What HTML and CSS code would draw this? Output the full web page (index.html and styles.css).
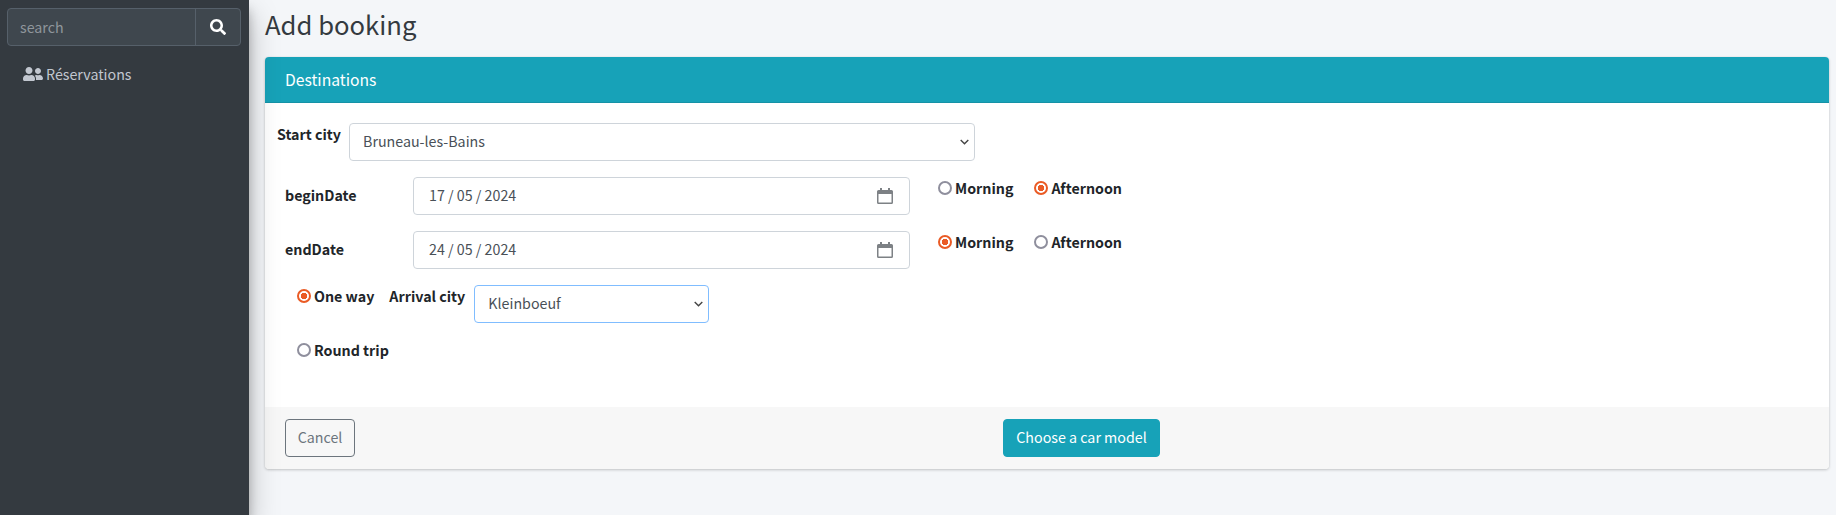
FILE: index.html
```html
<!DOCTYPE html>
<html lang="en">
<head>
    <meta charset="UTF-8">
    <meta name="viewport" content="width=device-width, initial-scale=1.0">
    <title>Add booking</title>
    <link rel="stylesheet" href="styles.css">
</head>
<body>
    <aside class="sidebar">
        <div class="search">
            <input class="search-input" type="text" placeholder="search">
            <button class="search-btn" type="button">
                <svg width="16" height="16" viewBox="0 0 512 512"><path fill="currentColor" d="M505 442.700L405.300 343c-4.500-4.500-10.600-7-17-7H372c27.600-35.300 44-79.700 44-128C416 93.100 322.900 0 208 0S0 93.100 0 208s93.100 208 208 208c48.300 0 92.700-16.400 128-44v16.300c0 6.400 2.500 12.500 7 17l99.700 99.700c9.400 9.400 24.600 9.400 33.900 0l28.300-28.300c9.400-9.400 9.400-24.600.1-34zM208 336c-70.700 0-128-57.200-128-128 0-70.700 57.200-128 128-128 70.700 0 128 57.200 128 128 0 70.700-57.200 128-128 128z"/></svg>
            </button>
        </div>
        <a class="nav-link" href="#">
            <svg width="20" height="16" viewBox="0 0 640 512"><path fill="currentColor" d="M192 256c61.900 0 112-50.100 112-112S253.900 32 192 32 80 82.100 80 144s50.100 112 112 112zm76.800 32h-8.300c-20.800 10-43.900 16-68.500 16s-47.600-6-68.500-16h-8.300C51.600 288 0 339.600 0 403.200V432c0 26.500 21.500 48 48 48h288c26.500 0 48-21.500 48-48v-28.800c0-63.600-51.600-115.200-115.200-115.200zM480 256c53 0 96-43 96-96s-43-96-96-96-96 43-96 96 43 96 96 96zm48 32h-3.800c-13.900 4.800-28.600 8-44.200 8s-30.300-3.200-44.200-8H432c-20.400 0-39.200 5.900-55.700 15.400 24.400 26.300 39.700 61.200 39.700 99.800v38.400c0 2.200-.5 4.300-.6 6.400H592c26.500 0 48-21.500 48-48 0-61.900-50.100-112-112-112z"/></svg>
            <span>Réservations</span>
        </a>
    </aside>

    <main class="content">
        <h1 class="page-title">Add booking</h1>

        <section class="card">
            <header class="card-header">Destinations</header>

            <div class="card-body">
                <div class="row-city">
                    <label class="lbl">Start city</label>
                    <div class="select-wrap start-select">
                        <select class="field">
                            <option>Bruneau-les-Bains</option>
                        </select>
                        <svg class="chevron" width="9" height="6" viewBox="0 0 9 6"><path d="M.7 1l3.800 3.800L8.300 1" fill="none" stroke="#444" stroke-width="1.400"/></svg>
                    </div>
                </div>

                <div class="row-date">
                    <label class="lbl date-lbl">beginDate</label>
                    <div class="field date-field">
                        <span>17 / 05 / 2024</span>
                        <svg width="16" height="16" viewBox="0 0 16 16"><path fill="#7d8185" d="M3 0h2v2h6V0h2v2h1.500A1.500 1.500 0 0 1 16 3.500v11a1.500 1.500 0 0 1-1.500 1.500h-13A1.500 1.500 0 0 1 0 14.500v-11A1.500 1.500 0 0 1 1.500 2H3zM1.500 6v8.500h13V6z"/></svg>
                    </div>
                    <div class="radios">
                        <label class="radio"><input type="radio" name="begin">Morning</label>
                        <label class="radio"><input type="radio" name="begin" checked>Afternoon</label>
                    </div>
                </div>

                <div class="row-date">
                    <label class="lbl date-lbl">endDate</label>
                    <div class="field date-field">
                        <span>24 / 05 / 2024</span>
                        <svg width="16" height="16" viewBox="0 0 16 16"><path fill="#7d8185" d="M3 0h2v2h6V0h2v2h1.500A1.500 1.500 0 0 1 16 3.500v11a1.500 1.500 0 0 1-1.500 1.500h-13A1.500 1.500 0 0 1 0 14.500v-11A1.500 1.500 0 0 1 1.500 2H3zM1.500 6v8.500h13V6z"/></svg>
                    </div>
                    <div class="radios">
                        <label class="radio"><input type="radio" name="end" checked>Morning</label>
                        <label class="radio"><input type="radio" name="end">Afternoon</label>
                    </div>
                </div>

                <div class="row-trip">
                    <label class="radio"><input type="radio" name="trip" checked>One way</label>
                    <label class="lbl arrival-lbl">Arrival city</label>
                    <div class="select-wrap arrival-select">
                        <select class="field focused">
                            <option>Kleinboeuf</option>
                        </select>
                        <svg class="chevron" width="9" height="6" viewBox="0 0 9 6"><path d="M.7 1l3.800 3.800L8.300 1" fill="none" stroke="#444" stroke-width="1.400"/></svg>
                    </div>
                </div>

                <div class="row-round">
                    <label class="radio"><input type="radio" name="trip">Round trip</label>
                </div>
            </div>

            <footer class="card-footer">
                <button class="btn btn-cancel" type="button">Cancel</button>
                <button class="btn btn-next" type="button">Choose a car model</button>
            </footer>
        </section>
    </main>
</body>
</html>
```

FILE: styles.css
```css
* {
    box-sizing: border-box;
}

body {
    margin: 0;
    height: 100vh;
    overflow: hidden;
    display: flex;
    background-color: #f4f6f9;
    color: #212529;
    font-family: "Noto Sans CJK SC", "Noto Sans", sans-serif;
    font-size: 14.250px;
    line-height: 24px;
}

/* sidebar */
.sidebar {
    width: 249px;
    flex-shrink: 0;
    padding: 8px 7px;
    background-color: #343a40;
    box-shadow: 0 14px 28px rgba(0, 0, 0, .25), 0 10px 10px rgba(0, 0, 0, .22);
    position: relative;
}

.search {
    display: flex;
    height: 38px;
    width: 234px;
    border: 1px solid #56606a;
    border-radius: 4px;
    background-color: #3f474e;
    overflow: hidden;
}

.search-input {
    flex: 1;
    min-width: 0;
    padding: 0 12px;
    border: 0;
    border-right: 1px solid #56606a;
    background: transparent;
    font: inherit;
    color: #fff;
    outline: none;
}

.search-input::placeholder {
    color: #8f969c;
    opacity: 1;
}

.search-btn {
    width: 44px;
    padding: 0;
    border: 0;
    background: transparent;
    color: #fff;
    display: flex;
    align-items: center;
    justify-content: center;
}

.nav-link {
    display: flex;
    align-items: center;
    gap: 3px;
    margin-top: 8px;
    padding: 8px 16px;
    color: #c2c7d0;
    text-decoration: none;
}

/* content */
.content {
    flex: 1;
    min-width: 0;
    padding: 8px 7px 0 16px;
}

.page-title {
    margin: 0 0 11px;
    height: 38px;
    color: #343a40;
    font-size: 25.650px;
    font-weight: 400;
    line-height: 32px;
}

.card {
    border-radius: 4px;
    background-color: #fff;
    box-shadow: 0 0 1px rgba(0, 0, 0, .125), 0 1px 3px rgba(0, 0, 0, .2);
    overflow: hidden;
}

.card-header {
    height: 46px;
    padding: 0 20px;
    display: flex;
    align-items: center;
    background-color: #17a2b8;
    border-bottom: 1px solid #1592a6;
    color: #fff;
    font-size: 15.680px;
}

.card-body {
    height: 304px;
    padding: 20px 12px 0;
}

.lbl {
    font-weight: 700;
    line-height: 22px;
}

.field {
    display: block;
    width: 100%;
    height: 38px;
    padding: 0 13px 2px;
    border: 1px solid #ced4da;
    border-radius: 4px;
    background-color: #fff;
    color: #495057;
    font: inherit;
    outline: none;
    appearance: none;
}

.focused {
    border-color: #80bdff;
}

.select-wrap {
    position: relative;
}

.chevron {
    position: absolute;
    top: 16px;
    right: 6px;
    pointer-events: none;
}

.row-city {
    display: flex;
    gap: 8px;
}

.start-select {
    width: 626px;
}

.row-date {
    display: flex;
    margin-top: 16px;
    padding-left: 8px;
}

.date-lbl {
    width: 128px;
    align-self: center;
    padding-bottom: 2px;
}

.date-field {
    width: 497px;
    display: flex;
    align-items: center;
    justify-content: space-between;
    padding: 0 16px 3px 15px;
}

.date-field svg {
    margin-top: 3px;
}

.radios {
    display: flex;
    gap: 21px;
    margin-left: 28px;
}

.radio {
    display: flex;
    align-items: center;
    height: 22px;
    font-weight: 700;
}

.radio input {
    appearance: none;
    width: 14px;
    height: 14px;
    margin: 0 3px 0 0;
    border: 2px solid #8f8f9d;
    border-radius: 50%;
    background-color: #fff;
}

.radio input:checked {
    border-color: #ea5b25;
    background: radial-gradient(circle, #ea5b25 0 3px, #fff 3.500px);
}

.row-trip {
    display: flex;
    margin-top: 16px;
    padding-left: 20px;
}

.arrival-lbl {
    margin-left: 15px;
}

.arrival-select {
    width: 235px;
    margin-left: 9px;
}

.row-round {
    margin-top: 16px;
    padding-left: 20px;
}

.card-footer {
    height: 62px;
    padding: 12px 20px;
    display: grid;
    grid-template-columns: 718px auto;
    justify-content: start;
    background-color: #f7f7f7;
}

.btn {
    height: 38px;
    padding: 0 0 2px;
    border-radius: 4px;
    font: inherit;
    white-space: nowrap;
}

.btn-cancel {
    width: 70px;
    border: 1px solid #6c757d;
    background: transparent;
    color: #6c757d;
}

.btn-next {
    width: 157px;
    border: 1px solid #17a2b8;
    background-color: #17a2b8;
    color: #fff;
}
```
